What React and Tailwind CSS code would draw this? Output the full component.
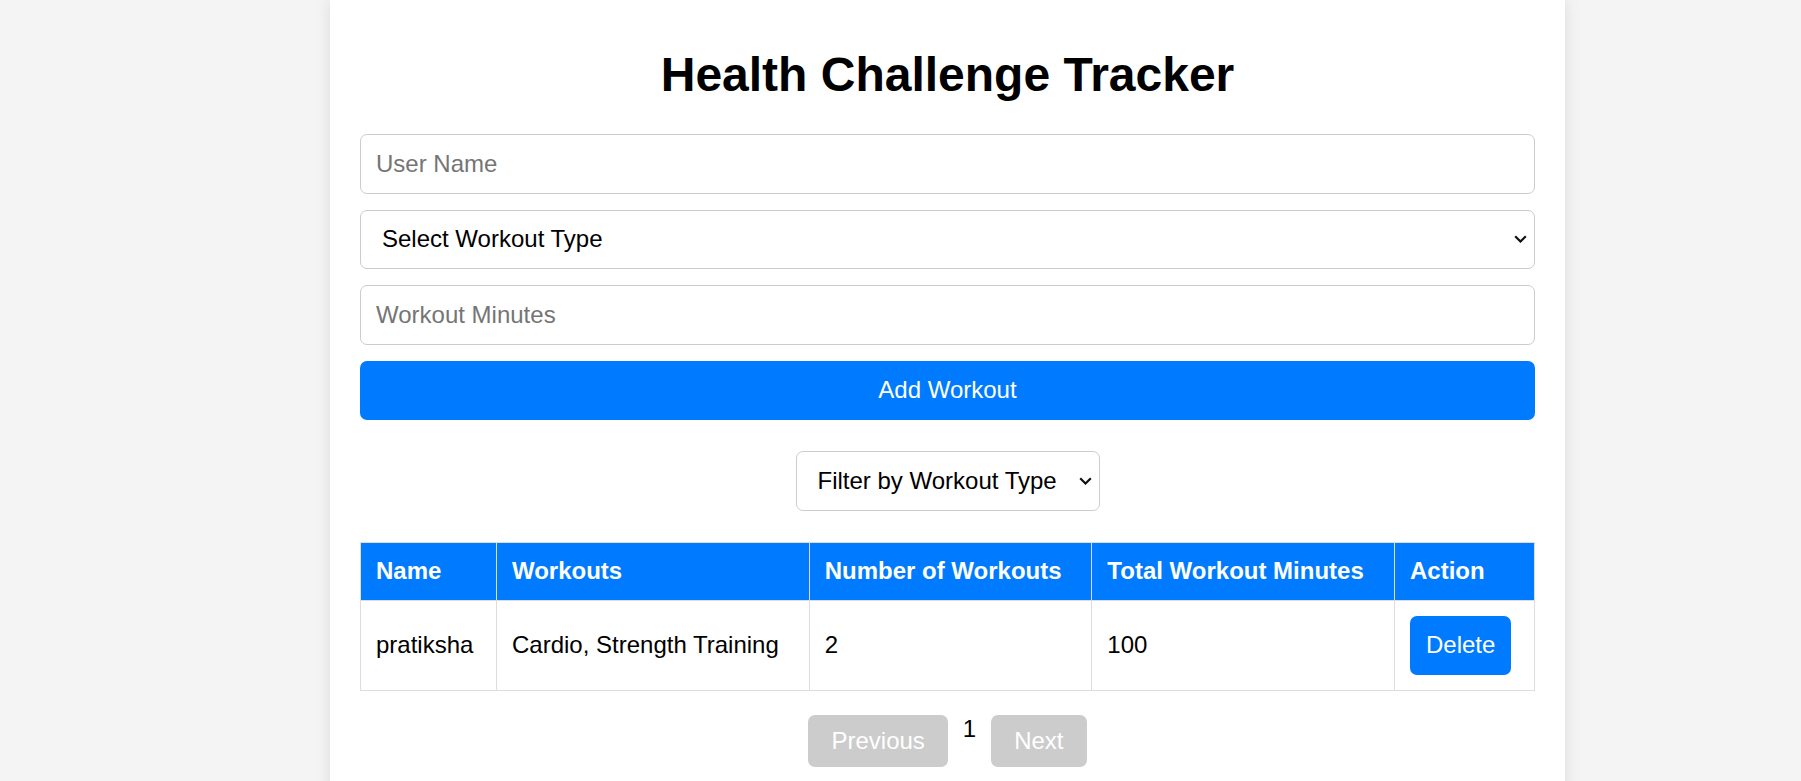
import React from "react";

const rows = [
  { name: "pratiksha", workouts: "Cardio, Strength Training", count: 2, minutes: 100 },
];

const cols = [
  { label: "Name", w: "w-[136px]" },
  { label: "Workouts", w: "w-[313px]" },
  { label: "Number of Workouts", w: "w-[283px]" },
  { label: "Total Workout Minutes", w: "w-[303px]" },
  { label: "Action", w: "w-[140px]" },
];

function Chevron() {
  return (
    <svg
      className="absolute right-[8px] top-1/2 -translate-y-1/2 pointer-events-none"
      width="13"
      height="8"
      viewBox="0 0 13 8"
      fill="none"
    >
      <path d="M1.2 1.2 L6.5 6.5 L11.8 1.2" stroke="#111" strokeWidth="2.2" />
    </svg>
  );
}

export default function App() {
  return (
    <div className="min-h-screen bg-[#f4f4f4] overflow-hidden font-['Liberation_Sans',Arial,sans-serif] text-black">
      <div className="ml-[330px] w-[1235px] min-h-[800px] bg-white shadow-[0_0_15px_rgba(0,0,0,0.1)] px-[30px] pt-[47px] pb-[30px]">
        {/* Title */}
        <h1 className="text-[48px] leading-[55px] font-bold text-center mb-[32px]">
          Health Challenge Tracker
        </h1>

        {/* Form */}
        <input
          type="text"
          placeholder="User Name"
          className="block w-full h-[59.5px] mb-[16px] px-[15px] text-[24px] border border-[#ccc] rounded-[7px] placeholder:text-[#757575] outline-none"
        />
        <div className="relative mb-[16px]">
          <select
            defaultValue=""
            className="block w-full h-[59.5px] pl-[21px] pr-[30px] text-[24px] border border-[#ccc] rounded-[7px] bg-white outline-none appearance-none"
          >
            <option value="">Select Workout Type</option>
            <option>Cardio</option>
            <option>Strength Training</option>
            <option>Yoga</option>
          </select>
          <Chevron />
        </div>
        <input
          type="number"
          placeholder="Workout Minutes"
          className="block w-full h-[59.5px] mb-[16px] px-[15px] text-[24px] border border-[#ccc] rounded-[7px] placeholder:text-[#757575] outline-none"
        />
        <button className="block w-full h-[59px] text-[24px] text-white bg-[#007bff] rounded-[7px]">
          Add Workout
        </button>

        {/* Filter */}
        <div className="flex justify-center mt-[31px] mb-[31px]">
          <div className="relative">
            <select
              defaultValue=""
              className="block w-[304px] h-[60px] pl-[21px] pr-[30px] text-[24px] border border-[#ccc] rounded-[7px] bg-white outline-none appearance-none"
            >
              <option value="">Filter by Workout Type</option>
              <option>Cardio</option>
              <option>Strength Training</option>
              <option>Yoga</option>
            </select>
            <Chevron />
          </div>
        </div>

        {/* Table */}
        <table className="w-full border-collapse text-[24px]">
          <thead>
            <tr>
              {cols.map((c) => (
                <th
                  key={c.label}
                  className={`${c.w} bg-[#007bff] text-white font-bold text-left px-[15px] py-[14.5px] border border-[#ddd] leading-[28px]`}
                >
                  {c.label}
                </th>
              ))}
            </tr>
          </thead>
          <tbody>
            {rows.map((r) => (
              <tr key={r.name}>
                <td className="px-[15px] py-[15px] border border-[#ddd]">{r.name}</td>
                <td className="px-[15px] py-[15px] border border-[#ddd]">{r.workouts}</td>
                <td className="px-[15px] py-[15px] border border-[#ddd]">{r.count}</td>
                <td className="px-[15px] py-[15px] border border-[#ddd]">{r.minutes}</td>
                <td className="px-[15px] py-[15px] border border-[#ddd]">
                  <button className="block h-[59.5px] px-[16px] text-white bg-[#007bff] rounded-[7px]">
                    Delete
                  </button>
                </td>
              </tr>
            ))}
          </tbody>
        </table>

        {/* Pagination */}
        <div className="flex justify-center mt-[24px] text-[24px]">
          <button disabled className="h-[52px] px-[23px] text-white bg-[#ccc] rounded-[7px]">
            Previous
          </button>
          <span className="mx-[15px] leading-[28px]">1</span>
          <button disabled className="h-[52px] px-[23px] text-white bg-[#ccc] rounded-[7px]">
            Next
          </button>
        </div>
      </div>
    </div>
  );
}
